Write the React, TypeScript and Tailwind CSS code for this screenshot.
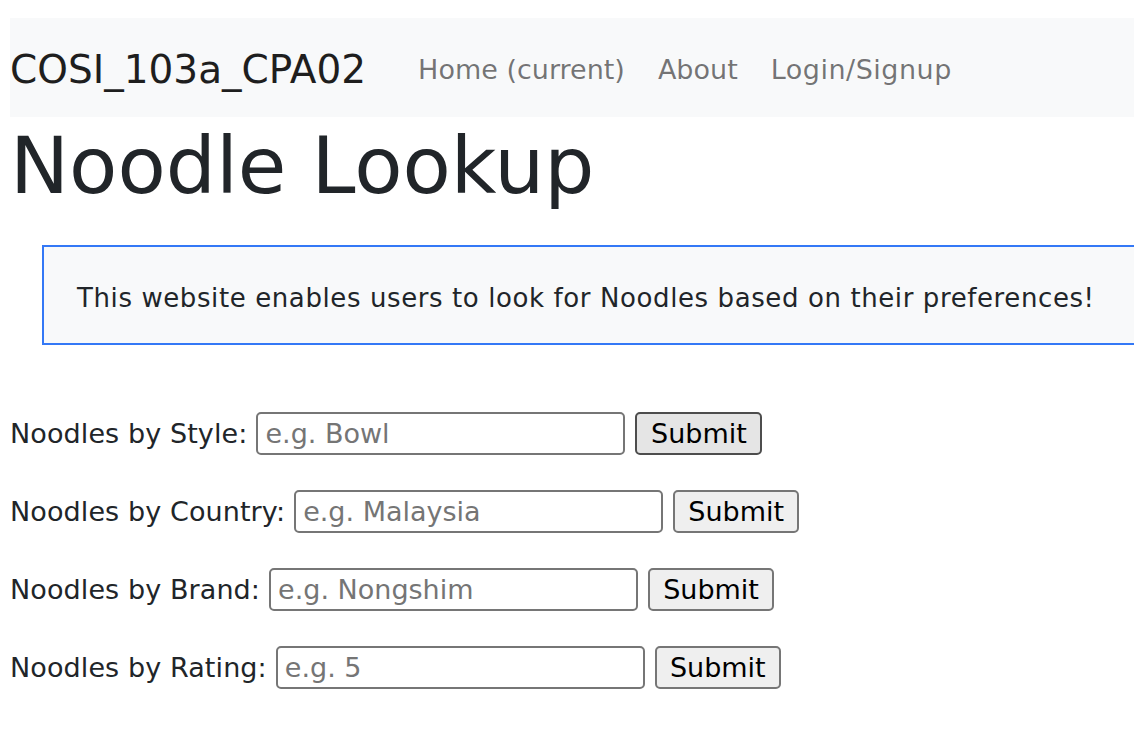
const rows = [
  { label: 'Noodles by Style:', placeholder: 'e.g. Bowl', active: true },
  { label: 'Noodles by Country:', placeholder: 'e.g. Malaysia' },
  { label: 'Noodles by Brand:', placeholder: 'e.g. Nongshim' },
  { label: 'Noodles by Rating:', placeholder: 'e.g. 5' },
]

const NavBar = () => {
  return (
    <nav className="h-[99px] bg-[#f8f9fa] flex items-start pt-[32px]">
      <span className="text-[39px] leading-none text-[#1e1e1e]">COSI_103a_CPA02</span>
      <ul className="flex items-start ml-[52px] mt-[6px] gap-[33px] text-[27px] leading-none text-black/55">
        <li>Home (current)</li>
        <li>About</li>
        <li className="tracking-[0.5px]">Login/Signup</li>
      </ul>
    </nav>
  )
}

const SearchRow = ({ label, placeholder, active }: { label: string; placeholder: string; active?: boolean }) => {
  return (
    <form className="flex items-center h-[43px]" onSubmit={(e) => e.preventDefault()}>
      <label className="text-[27px] leading-none text-[#212529] tracking-[0.1px] mr-[9px]">{label}</label>
      <input
        type="text"
        placeholder={placeholder}
        className="w-[369px] h-[43px] border-2 border-[#767676] rounded-[5px] px-[7px] text-[27px] leading-none bg-white placeholder:text-[#757575] outline-none"
      />
      <button
        type="submit"
        className={
          active
            ? 'ml-[10px] w-[127px] h-[43px] border-2 border-[#4d4d4d] rounded-[5px] bg-[#e5e5e5] text-[27px] leading-none text-black'
            : 'ml-[10px] w-[126px] h-[43px] border-2 border-[#767676] rounded-[5px] bg-[#efefef] text-[27px] leading-none text-black'
        }
      >
        Submit
      </button>
    </form>
  )
}

export default function App() {
  return (
    <div className="w-[1134px] h-[738px] overflow-hidden bg-white pl-[10px] pt-[18px]" style={{ fontFamily: '"DejaVu Sans", Verdana, sans-serif' }}>
      <NavBar />
      <h1 className="mt-[10px] text-[79px] leading-none text-[#212529] font-normal">Noodle Lookup</h1>

      <div className="ml-[32px] mt-[39px] w-[1200px] h-[100px] border-2 border-[#3478f6] bg-[#f8f9fa] pt-[38px] pl-[33px]">
        <p className="text-[26px] leading-none text-[#212529] tracking-[0.6px]">
          This website enables users to look for Noodles based on their preferences!
        </p>
      </div>

      <div className="mt-[67px] flex flex-col gap-[35px]">
        {rows.map((r) => (
          <SearchRow key={r.label} label={r.label} placeholder={r.placeholder} active={r.active} />
        ))}
      </div>
    </div>
  )
}
